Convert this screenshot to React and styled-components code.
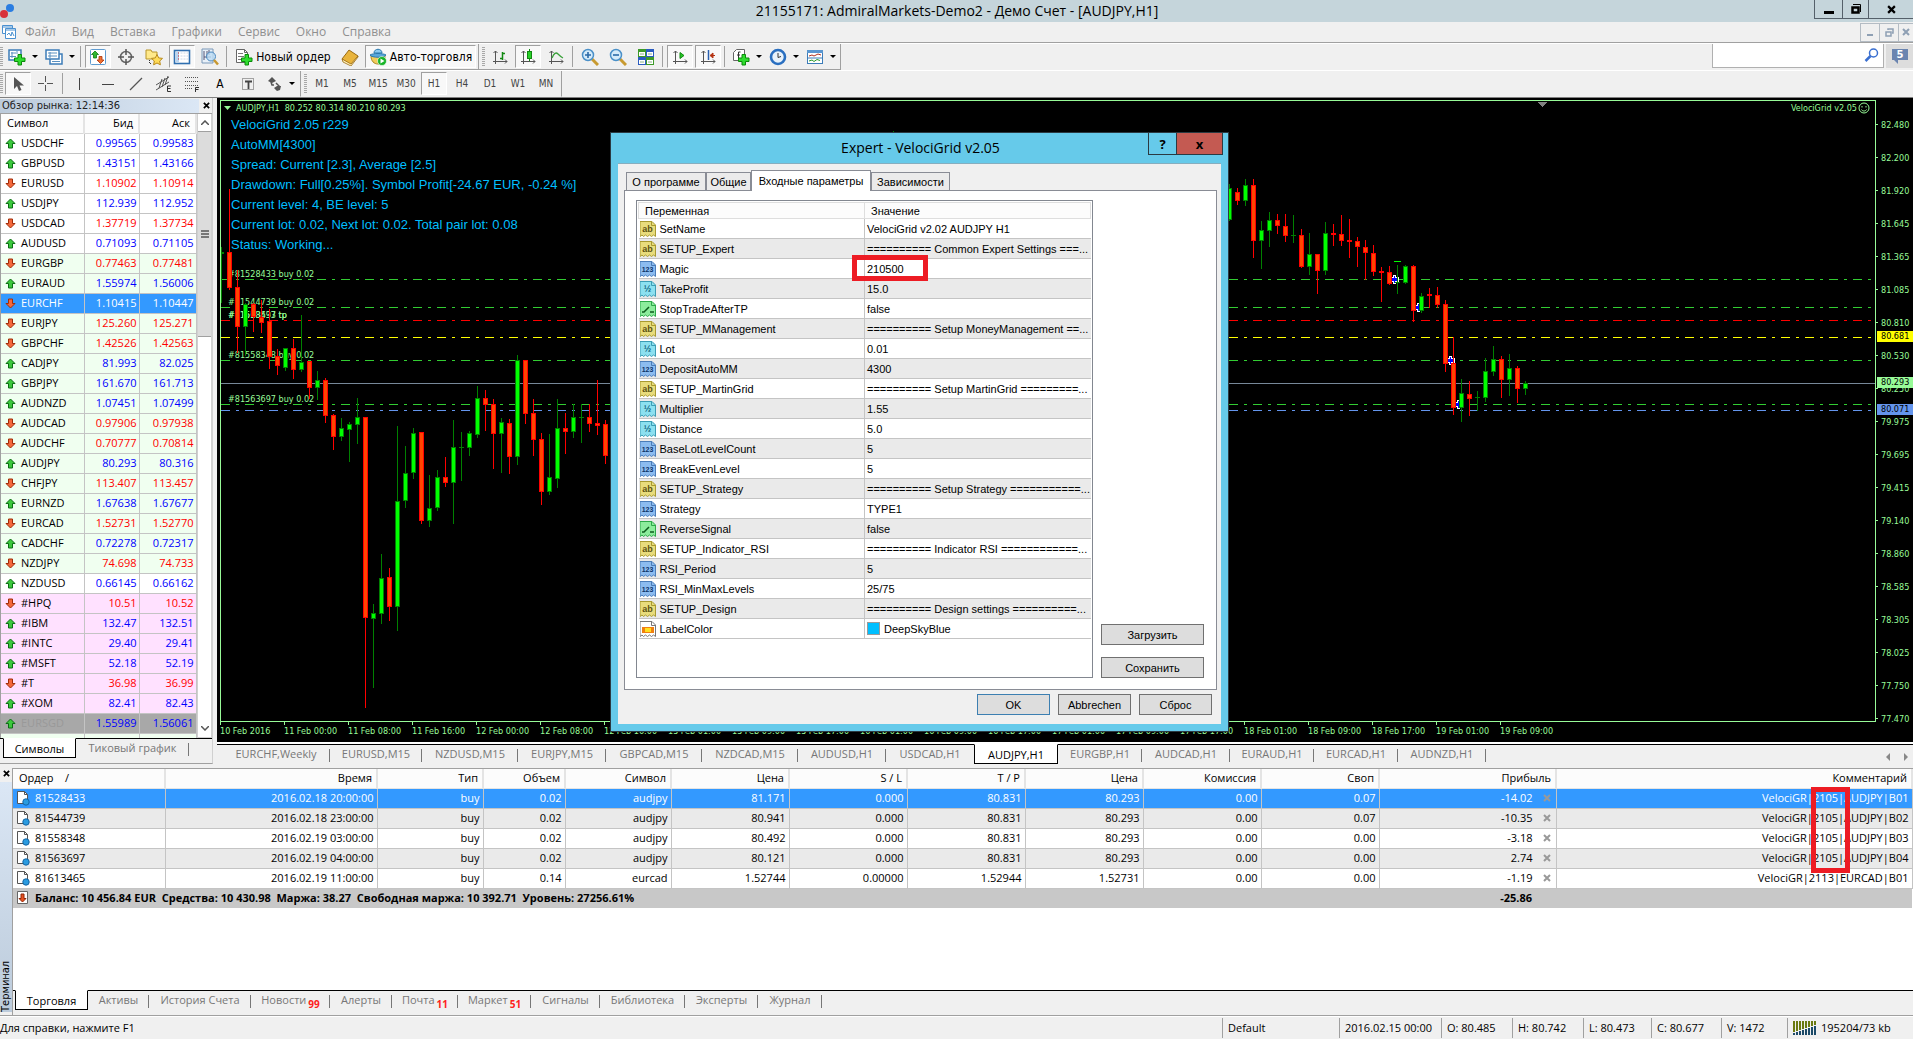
import React from 'react';
import styled, { createGlobalStyle, css } from 'styled-components';

const segoe = `"Open Sans", "Noto Sans", sans-serif`;
const tahoma = `"DejaVu Sans Condensed", "DejaVu Sans", sans-serif`;
const arial = `"Liberation Sans", Arial, sans-serif`;

const GlobalStyle = createGlobalStyle`
    * { box-sizing: border-box; }
    body { margin: 0; background: #f0f0f0; color: #000; font: 11px/16px ${segoe}; overflow: hidden; }
    button { font: inherit; color: inherit; margin: 0; padding: 0; border: 0; background: none; }
    table { border-collapse: collapse; table-layout: fixed; }
    td, th { padding: 0; font-weight: normal; white-space: nowrap; }
    svg { display: block; flex: none; }
`
const Page = styled.div`
    position: relative;
    display: flex;
    flex-direction: column;
    height: 100vh;
    min-height: 900px;
`

/* window title + menu */
const TitleBar = styled.header`
    display: flex;
    align-items: center;
    height: 22px;
    background: #c5d5db;
    h1 { flex: 1; margin: 0; padding-left: 84px; text-align: center; font: 14px/18px ${segoe}; }
`
const WinButtons = styled.div`
    display: flex;
    align-self: flex-start;
`
const WinButton = styled.button`
    display: flex;
    align-items: center;
    justify-content: center;
    width: ${p => p.$w}px;
    height: 19px;
    border: 1px solid #55606a;
    border-width: 0 0 1px 1px;
`
const MenuBar = styled.nav`
    display: flex;
    align-items: center;
    height: 21px;
    padding-left: 1px;
    border-bottom: 1px solid #a0a0a0;
    color: #8f8f8f;
    font-size: 12px;
    a { color: inherit; text-decoration: none; margin-right: 16px; }
`
const MenuLinks = styled.div`
    flex: 1;
    padding-left: 8px;
`
const ChildButton = styled.button`
    display: flex;
    align-items: center;
    justify-content: center;
    width: ${p => p.$w || 19}px;
    height: 19px;
    border: 1px solid #b4bcc4;
    border-right-width: 0;
`

/* toolbars */
const ToolRow = styled.div`
    display: flex;
    height: 27px;
    border-top: 1px solid #fff;
`
const ToolGroup = styled.div`
    display: flex;
    align-items: center;
    border-right: 1px solid #a0a0a0;
    border-bottom: 1px solid ${p => (p.$flat ? 'transparent' : '#a0a0a0')};
    & + & { padding-left: 3px; }
`
const Grip = styled.i`
    width: 3px;
    height: 20px;
    margin-right: 2px;
    background: repeating-linear-gradient(#a8a8a8 0 1px, #f0f0f0 1px 2px);
`
const Sep = styled.i`
    width: 1px;
    height: 21px;
    margin: 0 4px 0 1px;
    background: #a0a0a0;
`
const Tool = styled.button`
    display: flex;
    align-items: center;
    justify-content: center;
    gap: 3px;
    width: ${p => p.$w || 26}px;
    height: 23px;
    margin-right: 2px;
    border: 1px solid transparent;
    font: 12px/16px ${tahoma};
    white-space: nowrap;
    ${p => p.$on && css`
        background: #f8f8f8;
        border-color: #a0a0a0 #fff #fff #a0a0a0;
    `}
`
const Period = styled(Tool)`
    font-size: 10px;
    color: #444;
`
const Caret = styled.i`
    margin-left: 3px;
    border: 3px solid transparent;
    border-top-color: #000;
    border-bottom: 0;
`
const Search = styled.label`
    display: flex;
    align-items: center;
    width: 172px;
    height: 24px;
    margin-left: auto;
    background: #fff;
    border: 1px solid #b0b0b0;
    border-top: 0;
    input { flex: 1; min-width: 0; border: 0; outline: 0; background: none; font: inherit; }
    svg { margin-right: 4px; }
`
const Chat = styled.button`
    width: 27px;
    height: 24px;
    margin-left: 2px;
    padding-left: 5px;
    background: #ddd;
`

/* market watch */
const Main = styled.main`
    display: flex;
    flex: 1;
    min-height: 0;
    border-top: 1px solid #808080;
`
const Market = styled.aside`
    display: flex;
    flex-direction: column;
    width: 213px;
    margin: 0 4px 4px 0;
    border-right: 1px solid #d0d0d0;
    border-bottom: 1px solid #a0a0a0;
`
const MarketTitle = styled.div`
    display: flex;
    align-items: center;
    justify-content: space-between;
    height: 16px;
    padding-right: 2px;
    border-bottom: 1px solid #a0a0a0;
    font: 11px/14px ${tahoma};
    h2 { margin: 0; width: 199px; padding-left: 2px; font: inherit; color: #222; background: linear-gradient(90deg, #bccbdb, #dbe7f5); }
`
const MarketBody = styled.div`
    display: flex;
    flex: 1;
    min-height: 0;
    overflow: hidden;
    background: #fff;
    border-left: 1px solid #a0a0a0;
`
const Quotes = styled.table`
    width: 195px;
    height: 1px;
    th { height: 19px; background: #fcfcfc; border-right: 2px solid #e4e4e4; border-bottom: 1px solid #d8d8d8; text-align: right; padding-right: 5px; font: 11px/16px ${segoe}; }
    th:first-child { text-align: left; padding-left: 6px; }
    td { height: 20px; border: 1px solid #c4c4c4; border-width: 0 1px 1px 0; text-align: right; padding-right: 2px; line-height: 18px; }
    td:first-child { text-align: left; }
`
const quoteBg = { w: '#fff', g: '#f0fff0', p: '#ffe1ff', sel: '#3399ff', off: '#a8a8a8' };
const Quote = styled.tr`
    background: ${p => quoteBg[p.$bg]};
    color: ${p => (p.$bg === 'sel' ? '#fff' : p.$up ? '#0000ff' : '#ff0000')};
    && td:first-child { color: ${p => (p.$bg === 'sel' ? '#fff' : p.$bg === 'off' ? '#999' : '#000')}; }
`
const SymbolName = styled.span`
    display: flex;
    align-items: center;
    gap: 5px;
    padding-left: 4px;
`
const ScrollBar = styled.div`
    display: flex;
    flex-direction: column;
    width: 16px;
    height: 100%;
    border: 1px solid #d0d0d0;
    border-top: 0;
    button { display: flex; align-items: center; justify-content: center; height: 17px; background: #fff; }
`
const Thumb = styled.div`
    display: flex;
    align-items: center;
    justify-content: center;
    height: 206px;
    background: #dcdcdc;
    border: 1px solid #a0a0a0;
    border-width: 1px 0;
    margin-bottom: auto;
`
const SheetTabs = styled.div`
    display: flex;
    height: ${p => p.$h}px;
    padding-left: ${p => p.$pad}px;
    border-top: 1px solid #000;
    background: #f0f0f0;
`
const SheetTab = styled.button`
    position: relative;
    display: flex;
    justify-content: center;
    width: ${p => p.$w}px;
    height: 20px;
    margin-top: -1px;
    line-height: 19px;
    color: #777;
    white-space: nowrap;
    sub { align-self: flex-end; color: #ff2020; font-size: 10px; font-weight: bold; line-height: 11px; margin-left: 2px; }
    &::after { content: ''; position: absolute; right: 0; top: 5px; height: 13px; border-right: 1px solid ${p => (p.$last ? 'transparent' : '#777')}; }
    ${p => p.$on && css`
        color: #000;
        background: #fff;
        border: 1px solid #000;
        border-top-color: #fff;
        &::after { display: none; }
    `}
`

/* chart */
const ChartCol = styled.section`
    display: flex;
    flex-direction: column;
    flex: 1;
    min-width: 0;
`
const ChartArea = styled.div`
    display: flex;
    flex: 1;
    min-height: 0;
    padding: 2px 0 0 3px;
    background: #000;
    color: #98fb98;
    font: 9px/12px ${tahoma};
`
const PlotCol = styled.div`
    display: flex;
    flex-direction: column;
    flex: 1;
    min-width: 0;
`
const Plot = styled.div`
    position: relative;
    flex: 1;
    overflow: hidden;
    border: 1px solid #98fb98;
    > svg { position: absolute; inset: 0; width: 100%; height: 100%; }
`
const PlotHead = styled.div`
    position: relative;
    display: flex;
    align-items: center;
    gap: 5px;
    height: 14px;
    padding: 0 5px 0 3px;
    white-space: pre;
    span:last-of-type { margin-left: auto; }
    svg:last-child { margin-left: -4px; }
`
const Comment = styled.p`
    position: relative;
    margin: 0;
    padding-left: 10px;
    color: #00bfff;
    font: 13px/20px ${arial};
    white-space: pre-line;
`
const TimeAxis = styled.div`
    display: flex;
    height: 20px;
    overflow: hidden;
    span { flex: none; width: 64px; white-space: nowrap; line-height: 13px; }
    span::before { content: ''; display: block; height: 3px; border-left: 1px solid #98fb98; }
`
const PriceAxis = styled.div`
    position: relative;
    width: 37px;
    padding-top: 8px;
    > span { display: flex; align-items: center; gap: 3px; height: 33px; }
    > span::before { content: ''; width: 2px; border-top: 1px solid #98fb98; }
`
const PriceTag = styled.b`
    position: absolute;
    left: 1px;
    right: 0;
    top: ${p => p.$top}px;
    padding-left: 4px;
    background: ${p => p.$bg};
    color: #000;
    font-weight: normal;
    line-height: 11px;
`
const ChartTabs = styled.div`
    display: flex;
    height: 26px;
    border-bottom: 1px solid #fff;
    border-top: 2px solid #fff;
    > div { flex: 1; }
`
const TabScroll = styled.span`
    display: flex;
    align-items: center;
    gap: 14px;
    margin-left: auto;
    padding-right: 4px;
`

/* terminal */
const Terminal = styled.section`
    display: flex;
    height: 248px;
    border-bottom: 1px solid #a0a0a0;
`
const SideTitle = styled.div`
    display: flex;
    flex-direction: column;
    align-items: center;
    width: 12px;
    padding: 2px 0 3px;
    h2 { flex: 1; margin: 5px 0 0; width: 12px; writing-mode: vertical-rl; transform: rotate(180deg); text-align: left; font: 11px/12px ${tahoma}; background: linear-gradient(#bccbdb, #dbe7f5); }
`
const TerminalBody = styled.div`
    display: flex;
    flex-direction: column;
    flex: 1;
    min-width: 0;
    border-left: 1px solid #a0a0a0;
    border-top: 1px solid #a0a0a0;
`
const OrdersBox = styled.div`
    position: relative;
    flex: 1;
    background: #fff;
`
const Orders = styled.table`
    width: 100%;
    th { height: 19px; background: #fcfcfc; border-right: 2px solid #e4e4e4; border-bottom: 1px solid #e4e4e4; text-align: right; padding-right: 4px; }
    th:first-child { text-align: left; padding-left: 6px; }
    td { height: 20px; border: 1px solid #c4c4c4; border-width: 0 1px 1px 0; text-align: right; padding-right: 3px; line-height: 18px; }
    tbody tr:nth-child(even) { background: #eaeaea; }
    tbody tr:first-child { background: #3399ff; color: #fff; }
    tfoot td { background: #c8c8c8; border: 0; font-weight: bold; }
`
const Ticket = styled.span`
    display: flex;
    align-items: center;
    gap: 5px;
    padding-left: 3px;
    white-space: pre;
`
const Profit = styled.span`
    display: flex;
    align-items: center;
    justify-content: flex-end;
    gap: 10px;
    padding-right: ${p => (p.$total ? 21 : 2)}px;
`
const RedBox = styled.i`
    position: absolute;
    border: 5px solid #ed1c24;
    top: ${p => p.$top}px;
    left: ${p => p.$left};
    right: ${p => p.$right};
    width: ${p => p.$w}px;
    height: ${p => p.$h}px;
    pointer-events: none;
`
const StatusBar = styled.footer`
    display: flex;
    align-items: center;
    height: 23px;
    border-top: 1px solid #fff;
    > span:first-child { flex: 1; }
`
const StatusCell = styled.span`
    display: flex;
    align-items: center;
    gap: 4px;
    width: ${p => p.$w}px;
    height: 20px;
    padding-left: 5px;
    border-left: 1px solid #a0a0a0;
    white-space: nowrap;
`

/* expert dialog */
const Dialog = styled.section`
    position: absolute;
    top: 132px;
    left: 610px;
    width: 619px;
    padding: 0 7px 7px;
    border: 1px solid #2b3a42;
    background: #66caea;
    font: 11px/16px ${arial};
`
const DialogTitle = styled.div`
    display: flex;
    height: 30px;
    margin-right: -2px;
    h2 { flex: 1; margin: 0; padding-left: 75px; text-align: center; font: 14px/30px ${segoe}; }
`
const DialogButton = styled.button`
    width: ${p => p.$w}px;
    height: 22px;
    border: 1px solid #2b3a42;
    border-top: 0;
    background: ${p => p.$bg};
    font: bold 13px/18px ${segoe};
    & + & { margin-left: -1px; }
`
const DialogBody = styled.div`
    padding: 6px 4px 9px 6px;
    background: #f0f0f0;
    border: 1px solid #86aebf;
    border-width: 1px 0 0;
`
const DialogTabs = styled.div`
    display: flex;
    align-items: flex-end;
    padding-left: 2px;
`
const DialogTab = styled.button`
    width: ${p => p.$w}px;
    height: ${p => (p.$on ? 21 : 18)}px;
    margin-bottom: ${p => (p.$on ? -1 : 0)}px;
    position: relative;
    border: 1px solid #898c95;
    border-bottom: 0;
    background: ${p => (p.$on ? '#fff' : '#ebebeb')};
    white-space: nowrap;
`
const DialogPage = styled.div`
    display: flex;
    align-items: stretch;
    gap: 8px;
    height: 500px;
    padding: 9px 12px 11px 11px;
    border: 1px solid #898c95;
    background: #fff;
`
const ParamsBox = styled.div`
    flex: 1;
    padding: 1px;
    border: 1px solid #828790;
`
const Params = styled.table`
    width: 100%;
    th { height: 16px; text-align: left; padding-left: 6px; background: #fcfcfc; border: 1px solid #dedede; line-height: 14px; }
    th:first-child { width: 226px; }
    td { position: relative; height: 20px; padding-left: 2px; border-bottom: 1px solid #c4c4c4; line-height: 18px; }
    td:first-child { padding-left: 1px; border-right: 1px solid #c4c4c4; }
    tbody tr:nth-child(even) { background: #eaeaea; }
`
const ParamName = styled.span`
    display: flex;
    align-items: center;
    gap: 4px;
`
const Swatch = styled.i`
    display: inline-block;
    width: 13px;
    height: 13px;
    margin-right: 4px;
    vertical-align: -2px;
    border: 1px solid #9a9a9a;
    background: #00bfff;
`
const PageButtons = styled.div`
    display: flex;
    flex-direction: column;
    justify-content: flex-end;
    gap: 12px;
    width: 103px;
`
const PushButton = styled.button`
    width: ${p => p.$w || 103}px;
    height: 21px;
    border: 1px solid ${p => (p.$main ? '#3c7fb1' : '#707070')};
    background: #ddd;
`
const DialogFooter = styled.div`
    display: flex;
    justify-content: flex-end;
    gap: 8px;
    padding: 4px 5px 0;
`

/* icons */
const Icon = ({ s = 18, children }) => (
    <svg width={s} height={s} viewBox={`0 0 ${s} ${s}`} fill="none" aria-hidden="true">{children}</svg>
);
const Plus = ({ x, y }) => (
    <path transform={`translate(${x} ${y})`} d="M4 .5h3.500v3.500H11v3.500H7.500V11H4V7.500H.5V4H4z" fill="#2fdc2f" stroke="#0a8a0a" />
);
const Axes = () => <path d="M3.500 2v13M1 12.500h14M1.500 4l2-2 2 2M13 10.500l2 2-2 2" stroke="#555" />;
const icons = {
    newChart: <Icon><path d="M1 2h12v10H1z" fill="#fff" stroke="#3c7cb8" strokeWidth="1.500" /><path d="M4 4v6M2 8.500h6M3 5h5M9 3v3" stroke="#5a90c0" /><Plus x={6} y={6} /></Icon>,
    profiles: <Icon><path d="M5 6h12v10H5z" fill="#fff" stroke="#3c7cb8" strokeWidth="1.500" /><path d="M1 2h13v9H1z" fill="#fff" stroke="#3c7cb8" strokeWidth="1.500" /><path d="M3 5h9M3 8h9M5 4v6M7 13.500h8" stroke="#5a90c0" /></Icon>,
    market: <Icon><rect x="1.500" y="1.500" width="15" height="15" rx="1" fill="#fff" stroke="#5f9bd0" /><path d="M6 3l3.500 3.500H7.500V10h-3V6.500H2.500z" fill="#2fb82f" stroke="#0f7a0f" strokeWidth=".8" /><path d="M11.500 15.500L8 12h2V8.500h3V12h2z" fill="#f07030" stroke="#a83008" strokeWidth=".8" /></Icon>,
    target: <Icon><circle cx="9" cy="9" r="5.500" stroke="#666" strokeWidth="1.500" /><path d="M9 1v6M9 11v6M1 9h6M11 9h6" stroke="#555" strokeWidth="1.500" /></Icon>,
    navigator: <Icon><path d="M1 2h5l1 2h5v7H1z" fill="#ffe98a" stroke="#b8962a" /><path d="M12 6.500l1.700 3.400 3.800.5-2.800 2.600.7 3.800L12 15l-3.400 1.800.7-3.800-2.800-2.600 3.800-.5z" fill="#ffdc5a" stroke="#b88a1c" /><path d="M4.500 12v4M5 15.500h2" stroke="#333" strokeDasharray="1 1" /></Icon>,
    terminal: <Icon><rect x="1.500" y="2.500" width="15" height="13" fill="#fff" stroke="#2f6fb0" strokeWidth="1.600" /><path d="M3 4h3v10H3z" fill="#b9d4f0" /><path d="M7.500 5h8M7.500 8h8M7.500 11h8" stroke="#c8d8e8" strokeDasharray="2 1" /><path d="M5 5h1M5 8h1M5 11h1" stroke="#d02020" /></Icon>,
    tester: <Icon><path d="M1 1h11v14H1z" fill="#e8f0f8" stroke="#7a98b8" /><path d="M3 3v9M3 9h7M6 3v7M8 2v5" stroke="#557" /><circle cx="10" cy="8.500" r="4.500" fill="#bcdcf4" fillOpacity=".8" stroke="#4a88c0" /><path d="M13 12l4 4.500" stroke="#c89830" strokeWidth="2.500" /></Icon>,
    order: <Icon><path d="M1.500 1.500h8l3 3v10h-11z" fill="#fff" stroke="#666" /><path d="M9.500 1.500v3h3" stroke="#666" /><path d="M3 5.500h5M3 8.500h6M3 11.500h4" stroke="#777" /><Plus x={6} y={6} /></Icon>,
    book: <Icon><path d="M1 11l7-9 9 6-7 9z" fill="#e9b43c" stroke="#9a6a10" /><path d="M1 11l1 3 8 4 7-9V8l-7 8z" fill="#fff0b8" stroke="#9a6a10" strokeWidth=".8" /></Icon>,
    auto: <Icon><path d="M2 8c0 5 3 8 7 8s7-3 7-8z" fill="#f2cc5a" stroke="#a88420" /><path d="M1 7c3-2 13-2 16 0-2 3-14 3-16 0z" fill="#5aa8dc" stroke="#2a78ac" /><path d="M5 5c0-5 8-5 8 0z" fill="#8ccaf0" stroke="#2a78ac" /><circle cx="13" cy="13" r="4.500" fill="#18b428" stroke="#fff" strokeWidth=".6" /><path d="M11.500 10.500v5l4-2.500z" fill="#fff" /></Icon>,
    bars: <Icon s={16}><Axes /><path d="M8 9.500h2M10.500 3v8M11 4.500h2" stroke="#118811" strokeWidth="1.500" /></Icon>,
    candles: <Icon s={16}><Axes /><path d="M9.500 0v12" stroke="#118811" /><rect x="7.500" y="2.500" width="4" height="7" fill="#28d028" stroke="#118811" /></Icon>,
    line: <Icon s={16}><Axes /><path d="M4 9c2-5 4-6 6-4s3 3 5 4" stroke="#3aa03a" strokeWidth="1.300" /></Icon>,
    zoomIn: <Icon><path d="M11 11l6 6" stroke="#c89a30" strokeWidth="3" /><circle cx="7" cy="7" r="5.500" fill="#d4ebfa" stroke="#4a90c8" strokeWidth="1.500" /><path d="M4 7h6M7 4v6" stroke="#2a6aa8" strokeWidth="1.600" /></Icon>,
    zoomOut: <Icon><path d="M11 11l6 6" stroke="#c89a30" strokeWidth="3" /><circle cx="7" cy="7" r="5.500" fill="#d4ebfa" stroke="#4a90c8" strokeWidth="1.500" /><path d="M4 7h6" stroke="#2a6aa8" strokeWidth="1.600" /></Icon>,
    tile: <Icon><path d="M1 1h8v8H1zM9 9h8v8H9z" fill="#3c9a28" /><path d="M9 1h8v8H9zM1 9h8v8H1z" fill="#2a5cc0" /><path d="M2 4h6v4H2zM10 4h6v4h-6zM2 12h6v4H2zM10 12h6v4h-6z" fill="#fff" /><path d="M3 6h4M11 6h4M3 14h4M11 14h4" stroke="#8ab08a" /></Icon>,
    scroll: <Icon s={16}><Axes /><path d="M8 3.500v6l4-3z" fill="#28c828" stroke="#118811" /></Icon>,
    shift: <Icon s={16}><Axes /><path d="M8.500 1v10" stroke="#2a60b0" strokeWidth="1.500" /><path d="M15 6.500h-4M13 4l-3 2.500 3 2.500z" fill="#d04018" stroke="#b03010" /></Icon>,
    indicators: <Icon><path d="M4.500 1.500h8v11h-11v-8z" fill="#fff" stroke="#666" /><path d="M8.500 4H6.500v6M5 7h3" stroke="#333" /><Plus x={6} y={6} /></Icon>,
    clock: <Icon><circle cx="9" cy="9" r="7" fill="#e8f2fb" stroke="#2a6fc0" strokeWidth="2.600" /><path d="M9 5v4.500l3-1" stroke="#333" /></Icon>,
    template: <Icon><rect x="1.500" y="2.500" width="15" height="13" fill="#fff" stroke="#3c7cb8" /><path d="M1 2h16v3H1z" fill="#5a96d0" /><path d="M3 8l3-1 2 1 4-2 3 1" stroke="#b03020" /><path d="M1 10h16" stroke="#3c7cb8" /><path d="M3 13l3-1 2 1.500 3-2 3 1" stroke="#2a9a2a" /></Icon>,
    cursor: <Icon s={16}><path d="M4 1v12l3-3 2 5 2.500-1-2-4.500H14z" fill="#555" /></Icon>,
    cross: <Icon s={16}><path d="M7.500 0v6M7.500 9v6M0 7.500h6M9 7.500h6" stroke="#555" /></Icon>,
    vline: <Icon s={16}><path d="M7.500 2v12" stroke="#444" /></Icon>,
    hline: <Icon s={16}><path d="M2 8.500h12" stroke="#444" /></Icon>,
    trend: <Icon s={16}><path d="M2 14L14 2" stroke="#555" strokeWidth="1.200" /></Icon>,
    channel: <Icon s={16}><path d="M0 9L13 1M0 14L13 6M3 12l3-9M6 11l3-9M9 9l3-9" stroke="#555" /><path d="M15 10h-3.500v5.500H15M12 12.500h2.500" stroke="#333" /></Icon>,
    fibo: <Icon s={16}><path d="M1 1.500h14M1 5.500h14M1 9.500h14M1 12.500h8" stroke="#555" strokeDasharray="1 1" /><path d="M15 11.500h-3.500V16M12 13.500h2.500" stroke="#333" /></Icon>,
    label: <Icon s={16}><path d="M2.500 2.500h11v11h-11z" stroke="#555" strokeDasharray="1 1" /><path d="M5 5.500h7M8.500 5v8" stroke="#444" strokeWidth="1.800" /></Icon>,
    arrows: <Icon s={16}><path d="M1 5l4-4 4 4-4 2zM7 12l3-2 4 0-1 4-3 1z" fill="#555" /><path d="M4 6l1 3h2M9 7l4 4" stroke="#555" strokeWidth="1.500" /></Icon>,
};

const Arrow = ({ up }) => (
    <svg width="11" height="11" viewBox="0 0 11 11" aria-hidden="true">
        {up
            ? <path d="M5.500 1l4.500 4.500H7.500V10h-4V5.500H1z" fill="#3cc83c" stroke="#0c6e14" />
            : <path d="M5.500 10L1 5.500h2.500V1h4v4.500H10z" fill="#f4683c" stroke="#a02c08" />}
    </svg>
);
const Cross = ({ s = 8, c = '#000', w = 2 }) => (
    <svg width={s} height={s} viewBox="0 0 8 8" aria-hidden="true"><path d="M1 1l6 6M7 1L1 7" stroke={c} strokeWidth={w} /></svg>
);
const OrderIcon = () => (
    <svg width="14" height="16" viewBox="0 0 14 16" aria-hidden="true">
        <path d="M1.500 1.500h7l3 3v9h-10z" fill="#fff" stroke="#555" /><path d="M8.500 1.500v3h3" fill="none" stroke="#555" />
        <circle cx="10" cy="12" r="3.200" fill="#2a9be0" stroke="#1465a4" />
    </svg>
);
const paper = {
    ab: ['#e8dc7c', '#a89a30', '#5c5210'],
    123: ['#8cbcf0', '#4a7cb8', '#0c3468'],
    '½': ['#8ce0f0', '#3c9cb4', '#10647c'],
    bool: ['#8cec9c', '#2ca848', '#0c5c1c'],
    color: ['#fff', '#777', '#777'],
};
const ParamIcon = ({ kind }) => {
    const [fill, line, ink] = paper[kind];
    return (
        <svg width="16" height="16" viewBox="0 0 16 16" aria-hidden="true">
            <path d="M1 .5h11l3.500 3.500v11.500l-2-1.500-2 1.500-2-1.500-2 1.500-2-1.500-2 1.500-1.500-1.500-2 1.500V.5z" fill={fill} stroke={line} />
            <path d="M11.500.5v4h4" fill="none" stroke={line} />
            {kind === 'bool' && <path d="M2 11h2l5-5M10 11h4" fill="none" stroke={ink} strokeWidth="1.500" />}
            {kind === 'color' && <><path d="M2 6h12v6H2z" fill="#f08010" /><path d="M5 7h6v4H5z" fill="#ffe020" /></>}
            {kind !== 'bool' && kind !== 'color' && (
                <text x="7.500" y="11" textAnchor="middle" fill={ink} fontFamily="Liberation Sans, sans-serif" fontWeight="bold" fontSize={kind === '123' ? 7 : 9}>{kind}</text>
            )}
        </svg>
    );
};

/* data */
const quotes = [
    ['USDCHF', '0.99565', '0.99583', 1, 'w'], ['GBPUSD', '1.43151', '1.43166', 1, 'w'], ['EURUSD', '1.10902', '1.10914', 0, 'w'],
    ['USDJPY', '112.939', '112.952', 1, 'w'], ['USDCAD', '1.37719', '1.37734', 0, 'w'], ['AUDUSD', '0.71093', '0.71105', 1, 'w'],
    ['EURGBP', '0.77463', '0.77481', 0, 'g'], ['EURAUD', '1.55974', '1.56006', 1, 'g'], ['EURCHF', '1.10415', '1.10447', 0, 'sel'],
    ['EURJPY', '125.260', '125.271', 0, 'g'], ['GBPCHF', '1.42526', '1.42563', 0, 'g'], ['CADJPY', '81.993', '82.025', 1, 'g'],
    ['GBPJPY', '161.670', '161.713', 1, 'g'], ['AUDNZD', '1.07451', '1.07499', 1, 'g'], ['AUDCAD', '0.97906', '0.97938', 0, 'g'],
    ['AUDCHF', '0.70777', '0.70814', 0, 'g'], ['AUDJPY', '80.293', '80.316', 1, 'g'], ['CHFJPY', '113.407', '113.457', 0, 'g'],
    ['EURNZD', '1.67638', '1.67677', 1, 'g'], ['EURCAD', '1.52731', '1.52770', 0, 'g'], ['CADCHF', '0.72278', '0.72317', 1, 'g'],
    ['NZDJPY', '74.698', '74.733', 0, 'g'], ['NZDUSD', '0.66145', '0.66162', 1, 'w'], ['#HPQ', '10.51', '10.52', 0, 'p'],
    ['#IBM', '132.47', '132.51', 1, 'p'], ['#INTC', '29.40', '29.41', 1, 'p'], ['#MSFT', '52.18', '52.19', 1, 'p'],
    ['#T', '36.98', '36.99', 0, 'p'], ['#XOM', '82.41', '82.43', 1, 'p'], ['EURSGD', '1.55989', '1.56061', 1, 'off'],
];
const prices = ['82.480', '82.200', '81.920', '81.645', '81.365', '81.085', '80.810', '80.530', '80.250', '79.975', '79.695', '79.415', '79.140', '78.860', '78.585', '78.305', '78.025', '77.750', '77.470'];
const times = ['10 Feb 2016', '11 Feb 00:00', '11 Feb 08:00', '11 Feb 16:00', '12 Feb 00:00', '12 Feb 08:00', '12 Feb 16:00', '15 Feb 01:00', '15 Feb 09:00', '15 Feb 17:00', '16 Feb 01:00', '16 Feb 09:00', '16 Feb 17:00', '17 Feb 01:00', '17 Feb 09:00', '17 Feb 17:00', '18 Feb 01:00', '18 Feb 09:00', '18 Feb 17:00', '19 Feb 01:00', '19 Feb 09:00'];

// up, high, body top, body bottom, low
const early = [
    [1, 247, 252, 254, 302], [0, 189, 252, 288, 289], [0, 270, 287, 327, 352], [1, 303, 304, 327, 355], [0, 303, 304, 317, 331], [0, 300, 317, 323, 332],
    [0, 309, 321, 357, 368], [0, 349, 356, 366, 374], [1, 348, 348, 368, 370], [0, 339, 348, 370, 378], [1, 315, 362, 370, 371], [0, 361, 361, 388, 398],
    [1, 371, 380, 388, 399], [0, 378, 380, 416, 422], [0, 414, 415, 437, 449], [1, 418, 428, 437, 440], [1, 422, 424, 430, 461], [1, 398, 417, 425, 443],
    [0, 417, 417, 618, 707], [1, 604, 613, 619, 687], [1, 554, 578, 614, 623], [0, 568, 577, 607, 620], [1, 426, 501, 607, 630], [1, 446, 473, 501, 507],
    [1, 428, 433, 473, 478], [0, 432, 432, 521, 523], [1, 475, 508, 521, 526], [1, 470, 477, 508, 510], [0, 457, 477, 483, 486], [1, 420, 447, 483, 523],
    [1, 432, 447, 448, 480], [1, 431, 433, 448, 455], [1, 386, 398, 435, 437], [0, 390, 398, 405, 430], [0, 399, 404, 434, 468], [1, 418, 422, 434, 472],
    [0, 419, 423, 457, 473], [1, 355, 360, 457, 464], [0, 360, 360, 414, 423], [0, 399, 413, 440, 455], [0, 433, 439, 492, 504], [1, 434, 477, 492, 494],
    [1, 399, 428, 479, 487], [0, 413, 428, 432, 453], [1, 404, 417, 432, 437], [1, 404, 417, 418, 442], [0, 404, 417, 424, 431], [0, 380, 423, 426, 434],
    [0, 420, 424, 456, 463],
];
const late = [
    [1, 184, 188, 220, 220], [0, 188, 192, 201, 204], [1, 179, 185, 201, 205], [0, 179, 185, 241, 257], [1, 221, 230, 241, 268], [1, 212, 220, 231, 246],
    [0, 214, 220, 226, 233], [0, 214, 226, 236, 241], [1, 215, 235, 236, 242], [0, 229, 235, 267, 267], [1, 233, 254, 267, 274], [0, 254, 254, 271, 293],
    [1, 222, 233, 271, 274], [0, 224, 233, 235, 245], [0, 215, 234, 241, 245], [0, 219, 240, 242, 257], [0, 237, 241, 247, 266], [0, 240, 247, 253, 279],
    [0, 245, 253, 272, 275], [0, 267, 271, 273, 301], [0, 266, 272, 284, 284], [1, 265, 282, 283, 293], [1, 265, 266, 283, 283], [0, 265, 266, 311, 321],
    [1, 293, 296, 311, 312], [0, 288, 294, 296, 307], [0, 287, 295, 305, 307], [0, 300, 304, 364, 371], [0, 337, 363, 408, 414], [1, 379, 393, 408, 421],
    [0, 381, 394, 399, 415], [1, 391, 397, 398, 410], [1, 358, 371, 398, 401], [1, 346, 359, 372, 375], [0, 356, 359, 380, 397], [1, 354, 368, 380, 395],
    [0, 366, 368, 389, 402], [1, 381, 383, 389, 394],
];
const levels = [[279, '#32cd32'], [307, '#32cd32'], [320, '#ff0000'], [337, '#ffff00'], [360, '#32cd32'], [404, '#32cd32'], [410, '#6495ed']];
const orderLabels = [[277, '#81528433 buy 0.02'], [305, '#81544739 buy 0.02'], [318, '#81528433 tp'], [318, '#81563697 tp'], [358, '#81558348 buy 0.02'], [402, '#81563697 buy 0.02']];
const marks = [[1394, 279], [1418, 307], [1450, 360], [1458, 404]];

const chartTabs = [['EURCHF,Weekly', 108], ['EURUSD,M15', 92], ['NZDUSD,M15', 96], ['EURJPY,M15', 88], ['GBPCAD,M15', 96], ['NZDCAD,M15', 96], ['AUDUSD,H1', 88], ['USDCAD,H1', 88], ['AUDJPY,H1', 84], ['EURGBP,H1', 84], ['AUDCAD,H1', 88], ['EURAUD,H1', 84], ['EURCAD,H1', 84], ['AUDNZD,H1', 88]];
const terminalTabs = [['Торговля', 73], ['Активы', 61], ['История Счета', 102], ['Новости', 79, 99], ['Алерты', 62], ['Почта', 66, 11], ['Маркет', 73, 51], ['Сигналы', 69], ['Библиотека', 85], ['Эксперты', 73], ['Журнал', 64]];

const columns = [['Ордер', 152], ['Время', 212], ['Тип', 106], ['Объем', 82], ['Символ', 106], ['Цена', 118], ['S / L', 118], ['T / P', 118], ['Цена', 118], ['Комиссия', 118], ['Своп', 118], ['Прибыль', 177], ['Комментарий']];
const orders = [
    ['81528433', '2016.02.18 20:00:00', 'buy', '0.02', 'audjpy', '81.171', '0.000', '80.831', '80.293', '0.00', '0.07', '-14.02', 'VelociGR|2105|AUDJPY|B01'],
    ['81544739', '2016.02.18 23:00:00', 'buy', '0.02', 'audjpy', '80.941', '0.000', '80.831', '80.293', '0.00', '0.07', '-10.35', 'VelociGR|2105|AUDJPY|B02'],
    ['81558348', '2016.02.19 03:00:00', 'buy', '0.02', 'audjpy', '80.492', '0.000', '80.831', '80.293', '0.00', '0.00', '-3.18', 'VelociGR|2105|AUDJPY|B03'],
    ['81563697', '2016.02.19 04:00:00', 'buy', '0.02', 'audjpy', '80.121', '0.000', '80.831', '80.293', '0.00', '0.00', '2.74', 'VelociGR|2105|AUDJPY|B04'],
    ['81613465', '2016.02.19 11:00:00', 'buy', '0.14', 'eurcad', '1.52744', '0.00000', '1.52944', '1.52731', '0.00', '0.00', '-1.19', 'VelociGR|2113|EURCAD|B01'],
];
const params = [
    ['ab', 'SetName', 'VelociGrid v2.02 AUDJPY H1'],
    ['ab', 'SETUP_Expert', '========== Common Expert Settings ===...'],
    ['123', 'Magic', '210500'],
    ['½', 'TakeProfit', '15.0'],
    ['bool', 'StopTradeAfterTP', 'false'],
    ['ab', 'SETUP_MManagement', '========== Setup MoneyManagement ==...'],
    ['½', 'Lot', '0.01'],
    ['123', 'DepositAutoMM', '4300'],
    ['ab', 'SETUP_MartinGrid', '========== Setup MartinGrid =========...'],
    ['½', 'Multiplier', '1.55'],
    ['½', 'Distance', '5.0'],
    ['123', 'BaseLotLevelCount', '5'],
    ['123', 'BreakEvenLevel', '5'],
    ['ab', 'SETUP_Strategy', '========== Setup Strategy ===========...'],
    ['123', 'Strategy', 'TYPE1'],
    ['bool', 'ReverseSignal', 'false'],
    ['ab', 'SETUP_Indicator_RSI', '========== Indicator RSI ============...'],
    ['123', 'RSI_Period', '5'],
    ['123', 'RSI_MinMaxLevels', '25/75'],
    ['ab', 'SETUP_Design', '========== Design settings ==========...'],
    ['color', 'LabelColor', 'DeepSkyBlue'],
];
const status = [['Default', 117], ['2016.02.15 00:00', 102], ['O: 80.485', 71], ['H: 80.742', 71], ['L: 80.473', 68], ['C: 80.677', 70], ['V: 1472', 66]];

const Candle = ({ x, data: [up, high, top, bottom, low] }) => {
    const edge = up ? '#008000' : '#ff0000';
    return (
        <g>
            <rect x={x} y={high} width="1" height={low - high + 1} fill={edge} />
            <rect x={x - 2} y={top} width="5" height={bottom - top} fill={edge} />
            {bottom - top > 2 && <rect x={x - 1} y={top + 1} width="3" height={bottom - top - 2} fill={up ? '#00ff00' : '#ff4500'} />}
        </g>
    );
};

const Header = () => (
    <>
        <TitleBar>
            <svg width="16" height="20" viewBox="0 0 16 20" aria-hidden="true"><circle cx="10" cy="7" r="4" fill="#2a7de1" /><circle cx="4" cy="13" r="4" fill="#d8323c" /></svg>
            <h1>21155171: AdmiralMarkets-Demo2 - Демо Счет - [AUDJPY,H1]</h1>
            <WinButtons>
                <WinButton $w={28} aria-label="Свернуть"><svg width="10" height="10"><path d="M0 7h10v3H0z" /></svg></WinButton>
                <WinButton $w={26} aria-label="Развернуть"><svg width="10" height="10"><path d="M1.500 3.500h6v5h-6z" fill="none" stroke="#000" strokeWidth="2.500" /><path d="M2 .5h7.500V8" fill="none" stroke="#000" /></svg></WinButton>
                <WinButton $w={45} aria-label="Закрыть"><Cross s={9} /></WinButton>
            </WinButtons>
        </TitleBar>
        <MenuBar>
            <svg width="16" height="16" viewBox="0 0 16 16" fill="#fff" stroke="#4a90d0" aria-hidden="true"><path d="M1.500 1.500h10v8h-10z" /><path d="M4.500 4.500h10v10h-10z" /><path d="M1 3h11M5 6h10M6 11l2-2 2 3 1-4 2 4" /></svg>
            <MenuLinks>
                {['Файл', 'Вид', 'Вставка', 'Графики', 'Сервис', 'Окно', 'Справка'].map(m => <a href="#" key={m}>{m}</a>)}
            </MenuLinks>
            <ChildButton aria-label="Свернуть окно"><svg width="6" height="8"><path d="M0 6h6v2H0z" fill="#8fa0b4" /></svg></ChildButton>
            <ChildButton aria-label="Восстановить окно"><svg width="9" height="9" fill="none" stroke="#8fa0b4" strokeWidth="1.500"><path d="M1 4h5v4H1zM3 2V1h5v4H7" /></svg></ChildButton>
            <ChildButton $w={15} aria-label="Закрыть окно"><Cross c="#8fa0b4" /></ChildButton>
        </MenuBar>
    </>
);

const Toolbars = () => (
    <>
        <ToolRow>
            <ToolGroup>
                <Grip />
                <Tool $w={35} aria-label="Новый график">{icons.newChart}<Caret /></Tool>
                <Tool $w={35} aria-label="Профили">{icons.profiles}<Caret /></Tool>
                <Sep />
                <Tool $on aria-label="Обзор рынка">{icons.market}</Tool>
                <Tool aria-label="Окно данных">{icons.target}</Tool>
                <Tool aria-label="Навигатор">{icons.navigator}</Tool>
                <Tool $on aria-label="Терминал">{icons.terminal}</Tool>
                <Tool aria-label="Тестер стратегий">{icons.tester}</Tool>
                <Sep />
                <Tool $w={104}>{icons.order}Новый ордер</Tool>
                <Tool aria-label="MetaEditor">{icons.book}</Tool>
                <Tool $on $w={111}>{icons.auto}Авто-торговля</Tool>
            </ToolGroup>
            <ToolGroup>
                <Grip />
                <Tool aria-label="Бары">{icons.bars}</Tool>
                <Tool $on aria-label="Свечи">{icons.candles}</Tool>
                <Tool aria-label="Линия">{icons.line}</Tool>
                <Sep />
                <Tool aria-label="Увеличить">{icons.zoomIn}</Tool>
                <Tool aria-label="Уменьшить">{icons.zoomOut}</Tool>
                <Tool aria-label="Мозаика">{icons.tile}</Tool>
                <Sep />
                <Tool $on aria-label="Автопрокрутка">{icons.scroll}</Tool>
                <Tool $on aria-label="Сдвиг графика">{icons.shift}</Tool>
                <Sep />
                <Tool $w={35} aria-label="Индикаторы">{icons.indicators}<Caret /></Tool>
                <Tool $w={35} aria-label="Периоды">{icons.clock}<Caret /></Tool>
                <Tool $w={35} aria-label="Шаблоны">{icons.template}<Caret /></Tool>
            </ToolGroup>
            <Search>
                <input aria-label="Поиск" />
                <svg width="15" height="15" viewBox="0 0 15 15" fill="none" aria-hidden="true"><circle cx="9.500" cy="5" r="4" stroke="#3a6fd0" strokeWidth="1.500" /><path d="M6.500 8L1.500 13" stroke="#3a6fd0" strokeWidth="2.500" /></svg>
            </Search>
            <Chat aria-label="Сообщения: 5">
                <svg width="18" height="18" viewBox="0 0 18 18"><path d="M1 2h16v11H7v4l-4-4H1z" fill="#6a84b0" /><text x="9" y="11" textAnchor="middle" fill="#fff" fontSize="10" fontWeight="bold" fontFamily="DejaVu Sans, sans-serif">5</text></svg>
            </Chat>
        </ToolRow>
        <ToolRow>
            <ToolGroup $flat>
                <Grip />
                <Tool $on aria-label="Курсор">{icons.cursor}</Tool>
                <Tool aria-label="Перекрестие">{icons.cross}</Tool>
                <Sep />
                <Tool aria-label="Вертикальная линия">{icons.vline}</Tool>
                <Tool aria-label="Горизонтальная линия">{icons.hline}</Tool>
                <Tool aria-label="Трендовая линия">{icons.trend}</Tool>
                <Tool aria-label="Канал">{icons.channel}</Tool>
                <Tool aria-label="Фибоначчи">{icons.fibo}</Tool>
                <Tool>A</Tool>
                <Tool aria-label="Метка">{icons.label}</Tool>
                <Tool $w={35} aria-label="Стрелки">{icons.arrows}<Caret /></Tool>
            </ToolGroup>
            <ToolGroup $flat>
                <Grip />
                {['M1', 'M5', 'M15', 'M30', 'H1', 'H4', 'D1', 'W1', 'MN'].map(p => <Period key={p} $on={p === 'H1'}>{p}</Period>)}
            </ToolGroup>
        </ToolRow>
    </>
);

const MarketWatch = () => (
    <Market>
        <MarketTitle><h2>Обзор рынка: 12:14:36</h2><Cross s={7} /></MarketTitle>
        <MarketBody>
            <Quotes>
                <colgroup><col width="83" /><col width="55" /><col width="57" /></colgroup>
                <thead><tr><th>Символ</th><th>Бид</th><th>Аск</th></tr></thead>
                <tbody>
                    {quotes.map(([name, bid, ask, up, bg]) => (
                        <Quote key={name} $bg={bg} $up={up}>
                            <td><SymbolName><Arrow up={up} />{name}</SymbolName></td>
                            <td>{bid}</td>
                            <td>{ask}</td>
                        </Quote>
                    ))}
                    <Quote $bg="g"><td /><td /><td /></Quote>
                </tbody>
            </Quotes>
            <ScrollBar>
                <button aria-label="Вверх"><svg width="8" height="5"><path d="M0 5l4-4 4 4" fill="none" stroke="#555" strokeWidth="1.500" /></svg></button>
                <Thumb><svg width="8" height="8"><path d="M0 1h8M0 4h8M0 7h8" stroke="#555" strokeWidth="1.500" /></svg></Thumb>
                <button aria-label="Вниз"><svg width="8" height="5"><path d="M0 0l4 4 4-4" fill="none" stroke="#555" strokeWidth="1.500" /></svg></button>
            </ScrollBar>
        </MarketBody>
        <SheetTabs $h={25} $pad={3}>
            <SheetTab $on $w={73}>Символы</SheetTab>
            <SheetTab $w={113}>Тиковый график</SheetTab>
        </SheetTabs>
    </Market>
);

const Chart = () => (
    <ChartCol>
        <ChartArea>
            <PlotCol>
                <Plot>
                    <svg shapeRendering="crispEdges">
                        <g transform="translate(-221 -101)">
                            <rect x="221" y="383" width="100%" height="1" fill="#778899" />
                            {levels.map(([y, c]) => (
                                <svg key={y} x="221" y={y} width="100%" height="2"><line x1="0" x2="100%" y1=".5" y2=".5" stroke={c} strokeWidth="1" strokeDasharray="9 6 3 6" /></svg>
                            ))}
                            {orderLabels.map(([y, t]) => <text key={t} x="228" y={y} fill="#98fb98" fontFamily={tahoma} fontSize="9">{t}</text>)}
                            {marks.map(([x, y]) => <path key={x} d={`M${x - 3} ${y - 2}h2v-2h2v2h3v4h-3v2h-2v-2h-2z`} fill="#0000ff" stroke="#fff" />)}
                            {early.map((c, i) => <Candle key={i} x={221 + i * 8} data={c} />)}
                            {late.map((c, i) => <Candle key={i} x={1229 + i * 8} data={c} />)}
                            <rect x="893" y="131" width="1" height="40" fill="#008000" />
                            <rect x="1394" y="261" width="7" height="1" fill="#00ff00" />
                            <path d="M1538 102h9l-4.500 5z" fill="#808080" />
                        </g>
                    </svg>
                    <PlotHead>
                        <svg width="7" height="5"><path d="M0 0h7L3.500 4z" fill="#98fb98" /></svg>
                        <span>AUDJPY,H1  80.252 80.314 80.210 80.293</span>
                        <span>VelociGrid v2.05</span>
                        <svg width="12" height="12" viewBox="0 0 12 12" fill="none" stroke="#98fb98"><circle cx="6" cy="6" r="5" /><path d="M3.500 7.500c1 2 4 2 5 0M4 4v1.500M8 4v1.500" /></svg>
                    </PlotHead>
                    <Comment>{`VelociGrid 2.05 r229
                        AutoMM[4300]
                        Spread: Current [2.3], Average [2.5]
                        Drawdown: Full[0.25%]. Symbol Profit[-24.67 EUR, -0.24 %]
                        Current level: 4, BE level: 5
                        Current lot: 0.02, Next lot: 0.02. Total pair lot: 0.08
                        Status: Working...`}</Comment>
                </Plot>
                <TimeAxis>{times.map(t => <span key={t}>{t}</span>)}</TimeAxis>
            </PlotCol>
            <PriceAxis>
                {prices.map(p => <span key={p}>{p}</span>)}
                <PriceTag $top={231} $bg="#ffff00">80.681</PriceTag>
                <PriceTag $top={277} $bg="#98fb98">80.293</PriceTag>
                <PriceTag $top={304} $bg="#6495ed">80.071</PriceTag>
            </PriceAxis>
        </ChartArea>
        <ChartTabs>
            <SheetTabs $h={24} $pad={5}>
                {chartTabs.map(([t, w], i) => <SheetTab key={t} $w={w} $on={t === 'AUDJPY,H1'} $last={i === 7}>{t}</SheetTab>)}
                <TabScroll>
                    <svg width="5" height="8"><path d="M5 0v8L1 4z" fill="#888" /></svg>
                    <svg width="5" height="8"><path d="M0 0v8l4-4z" fill="#888" /></svg>
                </TabScroll>
            </SheetTabs>
        </ChartTabs>
    </ChartCol>
);

const TerminalPanel = () => (
    <Terminal>
        <SideTitle><Cross s={7} /><h2>Терминал</h2></SideTitle>
        <TerminalBody>
            <OrdersBox>
                <Orders>
                    <colgroup>{columns.map(([, w], i) => <col key={i} width={w} />)}</colgroup>
                    <thead><tr>{columns.map(([t], i) => <th key={i}>{t}{i === 0 && <>&nbsp;&nbsp;&nbsp; /</>}</th>)}</tr></thead>
                    <tbody>
                        {orders.map(row => (
                            <tr key={row[0]}>
                                {row.map((v, i) => (
                                    <td key={i}>
                                        {i === 0 ? <Ticket><OrderIcon />{v}</Ticket> : i === 11 ? <Profit>{v}<Cross c="#999" /></Profit> : v}
                                    </td>
                                ))}
                            </tr>
                        ))}
                    </tbody>
                    <tfoot>
                        <tr>
                            <td colSpan="11">
                                <Ticket>
                                    <svg width="14" height="16" viewBox="0 0 14 16"><path d="M1.500 1.500h10v12h-10z" fill="#fff" stroke="#666" /><path d="M6.500 12L3 8.500h2V4h3v4.500h2z" fill="#e85020" stroke="#902808" /></svg>
                                    {'Баланс: 10 456.84 EUR  Средства: 10 430.98  Маржа: 38.27  Свободная маржа: 10 392.71  Уровень: 27256.61%'}
                                </Ticket>
                            </td>
                            <td><Profit $total>-25.86</Profit></td>
                            <td />
                        </tr>
                    </tfoot>
                </Orders>
                <RedBox $top={18} $right="63px" $w={39} $h={86} />
            </OrdersBox>
            <SheetTabs $h={25} $pad={2}>
                {terminalTabs.map(([t, w, n], i) => <SheetTab key={t} $w={w} $on={i === 0}>{t}{n && <sub>{n}</sub>}</SheetTab>)}
            </SheetTabs>
        </TerminalBody>
    </Terminal>
);

const ExpertDialog = () => (
    <Dialog role="dialog" aria-label="Expert">
        <DialogTitle>
            <h2>Expert - VelociGrid v2.05</h2>
            <DialogButton $w={29} $bg="#66caea">?</DialogButton>
            <DialogButton $w={47} $bg="#c45a52">x</DialogButton>
        </DialogTitle>
        <DialogBody>
            <DialogTabs>
                <DialogTab $w={80}>О программе</DialogTab>
                <DialogTab $w={45}>Общие</DialogTab>
                <DialogTab $w={120} $on>Входные параметры</DialogTab>
                <DialogTab $w={79}>Зависимости</DialogTab>
            </DialogTabs>
            <DialogPage>
                <ParamsBox>
                    <Params>
                        <thead><tr><th>Переменная</th><th>Значение</th></tr></thead>
                        <tbody>
                            {params.map(([kind, name, value]) => (
                                <tr key={name}>
                                    <td><ParamName><ParamIcon kind={kind} />{name}</ParamName></td>
                                    <td>
                                        {kind === 'color' && <Swatch />}{value}
                                        {name === 'Magic' && <RedBox $top={-4} $left="-13px" $w={76} $h={26} />}
                                    </td>
                                </tr>
                            ))}
                        </tbody>
                    </Params>
                </ParamsBox>
                <PageButtons>
                    <PushButton>Загрузить</PushButton>
                    <PushButton>Сохранить</PushButton>
                </PageButtons>
            </DialogPage>
            <DialogFooter>
                <PushButton $w={73} $main>OK</PushButton>
                <PushButton $w={73}>Abbrechen</PushButton>
                <PushButton $w={73}>Сброс</PushButton>
            </DialogFooter>
        </DialogBody>
    </Dialog>
);

const App = () => {
    return (
        <Page>
            <GlobalStyle />
            <Header />
            <Toolbars />
            <Main>
                <MarketWatch />
                <Chart />
            </Main>
            <TerminalPanel />
            <StatusBar>
                <span>Для справки, нажмите F1</span>
                {status.map(([t, w]) => <StatusCell key={t} $w={w}>{t}</StatusCell>)}
                <StatusCell $w={126}>
                    <svg width="24" height="14" aria-hidden="true">
                        {Array.from({ length: 8 }, (_, i) => (
                            <g key={i}><rect x={i * 3} y="0" width="2" height={11 - i} fill="#6a7a10" /><rect x={i * 3} y={12 - i} width="2" height={i + 2} fill="#1c4a68" /></g>
                        ))}
                    </svg>
                    195204/73 kb
                </StatusCell>
            </StatusBar>
            <ExpertDialog />
        </Page>
    );
}

export default App;
